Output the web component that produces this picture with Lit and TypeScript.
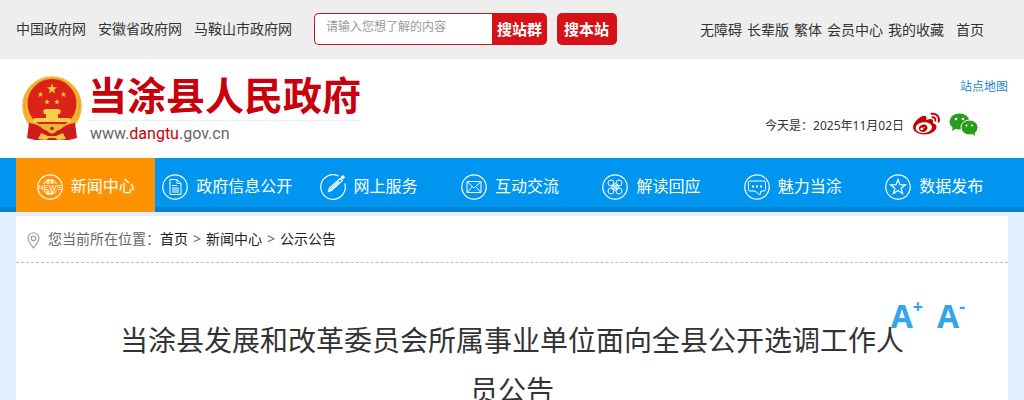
import { LitElement, html, css, svg } from "lit";
import { customElement } from "lit/decorators.js";
import { classMap } from "lit/directives/class-map.js";

const navItems = [
  {
    label: "新闻中心",
    active: true,
    icon: svg`<circle cx="13" cy="13" r="8" fill="currentColor" stroke="none"/>
      <path d="M13 5v16M9 5.500q-2.500 7.500 0 15M17 5.500q2.500 7.500 0 15M6 8h14M6 18h14" stroke="#ff9200" stroke-width=".7"/>
      <rect x="1.500" y="9.500" width="23" height="7" fill="#ff9200" stroke="none"/>
      <text x="13" y="15.800" text-anchor="middle" font-size="8" font-weight="400" font-family="Liberation Sans, sans-serif" fill="currentColor" stroke="none">NEWS</text>`,
  },
  {
    label: "政府信息公开",
    icon: svg`<path d="M8 5.500h7l4 4v11H8zM15 5.500v4h4M10 11.500h5M10 14h7M10 16h7M10 18h7"/>`,
  },
  {
    label: "网上服务",
    open: true,
    icon: svg`<path d="M18.500 2A12.300 12.300 0 1 0 24.800 9.500M8.500 17.500l1-3.500L20 4.500l2.200 2.200L11.500 16.500zM19 7.500L10 16M8.500 17.500l2-.5" stroke-width="1.200"/><circle cx="22.800" cy="3.300" r="1.500" fill="currentColor"/>`,
  },
  {
    label: "互动交流",
    icon: svg`<path d="M6 7.500h14v11H6zM6.500 8l6.500 6 6.500-6M6.500 18l4.500-5M19.500 18L15 13"/>`,
  },
  {
    label: "解读回应",
    icon: svg`<circle cx="9" cy="9" r="3"/><circle cx="17" cy="9" r="3"/><circle cx="9" cy="17" r="3"/><circle cx="17" cy="17" r="3"/>
      <path d="M10 10l6 6M16 10l-6 6M13 9v8M9 13h8" stroke-width="1.300" opacity=".7"/>`,
  },
  {
    label: "魅力当涂",
    icon: svg`<path d="M6 7h14q1.500 0 1.500 1.500v7q0 1.500-1.500 1.500h-3l-1 4-5-4H6q-1.500 0-1.500-1.500v-7Q4.500 7 6 7z"/>
      <path d="M8 12.500h2M12 12.500h2M16 12.500h2" stroke-width="2"/>`,
  },
  {
    label: "数据发布",
    icon: svg`<path d="M13 5.500l1.900 5.100 5.600.2-4.400 3.400 1.500 5.300L13 16.400l-4.600 3.100 1.500-5.300-4.400-3.400 5.600-.2z" stroke-width="1.200"/>`,
  },
];

const star = "M0-1L.24-.32.95-.31.38.12.59.81 0 .4-.59.81-.38.12-.95-.31-.24-.32z";

@customElement("app-root")
export class AppRoot extends LitElement {
  static styles = css`
    :host {
      display: block;
      min-height: 100vh;
      background: #e1f1ff;
      color: #333;
      font: 14px/24px "Noto Sans", "Noto Sans CJK SC", sans-serif;
    }
    a {
      color: inherit;
      text-decoration: none;
    }
    svg {
      display: block;
      flex: none;
    }
    .wrap {
      margin: 0 16px;
    }
    .top {
      background: #eee;
    }
    .topbar {
      display: flex;
      align-items: flex-start;
      padding: 13px 24px 14px 0;
    }
    .sites {
      display: flex;
      gap: 12px;
      padding-top: 4px;
    }
    .search {
      display: flex;
      margin-left: 22px;
      gap: 10px;
    }
    .box {
      display: flex;
    }
    .field {
      box-sizing: border-box;
      width: 178px;
      height: 32px;
      padding: 0 11px 6px;
      border: 1px solid #c4161c;
      border-right: 0;
      border-radius: 5px 0 0 5px;
      background: #fff;
      font: inherit;
      font-size: 12px;
    }
    .field::placeholder {
      color: #999;
      opacity: 1;
    }
    .go {
      height: 32px;
      padding: 0 5px;
      border: 0;
      border-radius: 0 5px 5px 0;
      background: #d71118;
      color: #fff;
      font: inherit;
      font-size: 15px;
      font-weight: 700;
    }
    .solo {
      padding: 0 8px 0 7px;
      border-radius: 5px;
    }
    .tools {
      display: flex;
      gap: 5px;
      margin-left: auto;
      padding-top: 5px;
    }
    .home {
      margin-left: 7px;
    }
    .head {
      background: #fff;
    }
    .banner {
      display: flex;
      justify-content: space-between;
      padding-bottom: 12px;
    }
    .brand {
      display: flex;
      gap: 5px;
      padding: 16px 0 0 5px;
    }
    .name {
      display: block;
      font-size: 39px;
      line-height: 40px;
      font-weight: 700;
      color: #c7000b;
    }
    .url {
      display: block;
      margin-top: 5px;
      padding-left: 2px;
      border-top: 1px solid #eee;
      font: 16px/25px Roboto, sans-serif;
      color: #666;
    }
    .url b {
      font-weight: 400;
      color: #c7000b;
    }
    .side {
      display: flex;
      flex-direction: column;
      align-items: flex-end;
      gap: 12px;
      padding-top: 16px;
      font-size: 12px;
    }
    .map {
      color: #1e88c7;
    }
    .today {
      display: flex;
      align-items: center;
      gap: 9px;
      padding-right: 29px;
    }
    .date {
      padding-top: 3px;
    }
    .navbar {
      background: linear-gradient(#0096f0, #0096f0) top / 100% calc(100% - 5px) no-repeat #0082d2;
    }
    .nav {
      display: grid;
      grid-template-columns: repeat(7, 1fr);
      gap: 2px;
      padding-right: 4px;
    }
    .item {
      display: flex;
      align-items: center;
      justify-content: center;
      gap: 8px;
      height: 50px;
      padding-top: 4px;
      color: #fff;
      font-size: 16px;
      white-space: nowrap;
    }
    .item span {
      padding-bottom: 3px;
    }
    .active {
      background: #ff9200;
    }
    .page {
      position: relative;
      margin-top: 4px;
      background: #fff;
    }
    .crumbs {
      display: flex;
      align-items: center;
      padding: 11px 11px;
      border-bottom: 1px dashed #bbb;
      color: #666;
    }
    .crumbs svg {
      margin: 3px 8px 0 0;
    }
    .crumbs a {
      color: #222;
    }
    .sep {
      margin: 0 5px;
    }
    h1 {
      margin: 0 auto;
      max-width: 792px;
      padding: 52px 0 0;
      font-size: 28px;
      line-height: 50px;
      font-weight: 400;
      text-align: center;
    }
    .sizes {
      position: absolute;
      top: 78px;
      right: 43px;
      display: flex;
      gap: 14px;
    }
    .size {
      display: flex;
      padding: 0;
      border: 0;
      background: none;
      color: #35a4e8;
      font: 700 32px/44px "Noto Sans", sans-serif;
    }
    .size sup {
      font-size: 18px;
      line-height: 24px;
    }
  `;

  render() {
    return html`
      <div class="top">
        <div class="wrap topbar">
          <div class="sites">
            <a href="#">中国政府网</a><a href="#">安徽省政府网</a><a href="#">马鞍山市政府网</a>
          </div>
          <form class="search" @submit=${(e: Event) => e.preventDefault()}>
            <div class="box">
              <input class="field" type="text" aria-label="搜索" placeholder="请输入您想了解的内容" />
              <button class="go">搜站群</button>
            </div>
            <button class="go solo">搜本站</button>
          </form>
          <div class="tools">
            <a href="#">无障碍</a><a href="#">长辈版</a><a href="#">繁体</a><a href="#">会员中心</a><a href="#">我的收藏</a><a class="home" href="#">首页</a>
          </div>
        </div>
      </div>
      <header class="head">
        <div class="wrap banner">
          <a class="brand" href="#">${this.emblem()}
            <span>
              <span class="name">当涂县人民政府</span>
              <span class="url">www.<b>dangtu</b>.gov.cn</span>
            </span>
          </a>
          <div class="side">
            <a class="map" href="#">站点地图</a>
            <div class="today">
              <span class="date">今天是：2025年11月02日</span>
              <a href="#" aria-label="微博">
                <svg width="27" height="27" viewBox="0 0 512 512" fill="#c40000"><path d="M407 177.600c7.600-24-13.400-46.800-37.400-41.700-22 4.800-28.800-28.100-7.100-32.800 50.100-10.900 92.300 37.100 76.500 84.800-6.800 21.200-38.800 10.800-32-10.300zM214.800 446.700C108.500 446.700 0 395.300 0 310.400c0-44.300 28-95.400 76.300-143.700C176 67 279.500 65.800 249.900 161c-4 13.100 12.300 5.700 12.300 6 79.500-33.600 140.500-16.800 114 51.400-3.700 9.400 1.100 10.900 8.300 13.100 135.700 42.300 34.800 215.200-169.700 215.200zm143.700-146.300c-5.400-55.700-78.500-94-163.400-85.700-84.800 8.600-148.800 60.300-143.400 116s78.500 94 163.400 85.700c84.800-8.600 148.800-60.300 143.400-116zM347.900 35.100c-25.900 5.600-16.800 43.700 8.300 38.300 72.300-15.200 134.800 52.800 111.700 124-7.400 24.200 29.100 37 37.400 12 31.900-99.800-55.100-195.900-157.400-174.300zm-78.500 311c-17.100 38.800-66.800 60-109.100 46.300-40.800-13.100-58-53.400-40.300-89.700 17.700-35.400 63.100-55.400 103.400-45.100 42 10.800 63.100 50.200 46 88.500zm-86.300-30c-12.900-5.400-30 .3-38 12.900-8.300 12.900-4.300 28 8.600 34 13.100 6 30.800.3 39.100-12.900 8-13.100 3.700-28.300-9.700-34zm32.600-13.400c-5.100-1.700-11.400.6-14.300 5.400-2.900 5.100-1.400 10.600 3.700 12.900 5.100 2 11.700-.3 14.600-5.400 2.800-5.200 1.100-10.900-4-12.900z"/></svg>
              </a>
              <a href="#" aria-label="微信">
                <svg width="30" height="24" viewBox="0 0 30 24">
                  <path d="M4 13l-1 5 5-3z" fill="#2a9c1b"/>
                  <ellipse cx="10.500" cy="8.500" rx="10" ry="8" fill="#2a9c1b"/>
                  <circle cx="7" cy="6" r="1.300" fill="#fff"/><circle cx="14" cy="6" r="1.300" fill="#fff"/>
                  <ellipse cx="20.500" cy="14.500" rx="8.500" ry="7.500" fill="#2a9c1b" stroke="#fff"/>
                  <path d="M22 20l4 3-.5-4.500z" fill="#2a9c1b"/>
                  <circle cx="17.500" cy="12.500" r="1.100" fill="#fff"/><circle cx="23" cy="12.500" r="1.100" fill="#fff"/>
                </svg>
              </a>
            </div>
          </div>
        </div>
      </header>
      <nav class="navbar">
        <div class="wrap nav">
          ${navItems.map(
            (n) => html`<a href="#" class=${classMap({ item: true, active: !!n.active })}>
              <svg width="26" height="26" viewBox="0 0 26 26" fill="none" stroke="currentColor" stroke-width="1">
                ${n.open ? "" : svg`<circle cx="13" cy="13" r="12.200" stroke-width="1.200"/>`}${n.icon}
              </svg>
              <span>${n.label}</span>
            </a>`
          )}
        </div>
      </nav>
      <main class="wrap page">
        <div class="crumbs">
          <svg width="13" height="17" viewBox="0 0 13 17" fill="none" stroke="#999" stroke-width="1.100">
            <path d="M6.500 15.800Q1 9.500 1 6.300a5.500 5.500 0 0 1 11 0Q12 9.500 6.500 15.800z"/><circle cx="6.500" cy="6.300" r="2.300"/>
          </svg>
          <span>您当前所在位置：</span><a href="#">首页</a><span class="sep">&gt;</span><a href="#">新闻中心</a><span class="sep">&gt;</span><a href="#">公示公告</a>
        </div>
        <h1>当涂县发展和改革委员会所属事业单位面向全县公开选调工作人员公告</h1>
        <div class="sizes">
          <button class="size" aria-label="放大字号">A<sup>+</sup></button>
          <button class="size" aria-label="缩小字号">A<sup>-</sup></button>
        </div>
      </main>
    `;
  }

  private emblem() {
    const stars = [
      [31, 14, 5.5],
      [19.5, 19.5, 3],
      [42.5, 19.5, 3],
      [26, 27, 3],
      [36, 27, 3],
    ];
    return html`<svg width="62" height="66" viewBox="0 0 62 66" aria-hidden="true">
      <path d="M9 46L7 63l8 2h32l8-2-2-17z" fill="#d01a1c"/>
      <circle cx="31" cy="31" r="29.800" fill="#f2b632"/>
      <circle cx="31" cy="31" r="27.500" fill="none" stroke="#e3a52a" stroke-width="1"/>
      <circle cx="31" cy="28.500" r="24.500" fill="#dc2118"/>
      ${stars.map(([x, y, r]) => svg`<path d=${star} fill="#f9c83c" transform="translate(${x} ${y}) scale(${r})"/>`)}
      <path d="M22 36l2-2h14l2 2-1 3h-2v4h12l1 4H12l1-4h12v-4h-2z" fill="#f9cf4a"/>
      <path d="M8 48q9 1 14 6l9 4 9-4q5-5 14-6l2 15-9 2-8-5-8 3-8-3-8 5-9-2z" fill="#cf1b1c"/>
      <path d="M18 49h26q-4 5-9 5a5 5 0 0 1-8 0q-5 0-9-5z" fill="#f2b632"/>
      <circle cx="31" cy="54" r="4.500" fill="#f2b632"/><circle cx="31" cy="53.500" r="1.800" fill="#cf1b1c"/>
      <path d="M17 64l3-6 7 3h8l7-3 3 6-8 1-3-2h-6l-3 2z" fill="#f9c83c"/>
    </svg>`;
  }
}
